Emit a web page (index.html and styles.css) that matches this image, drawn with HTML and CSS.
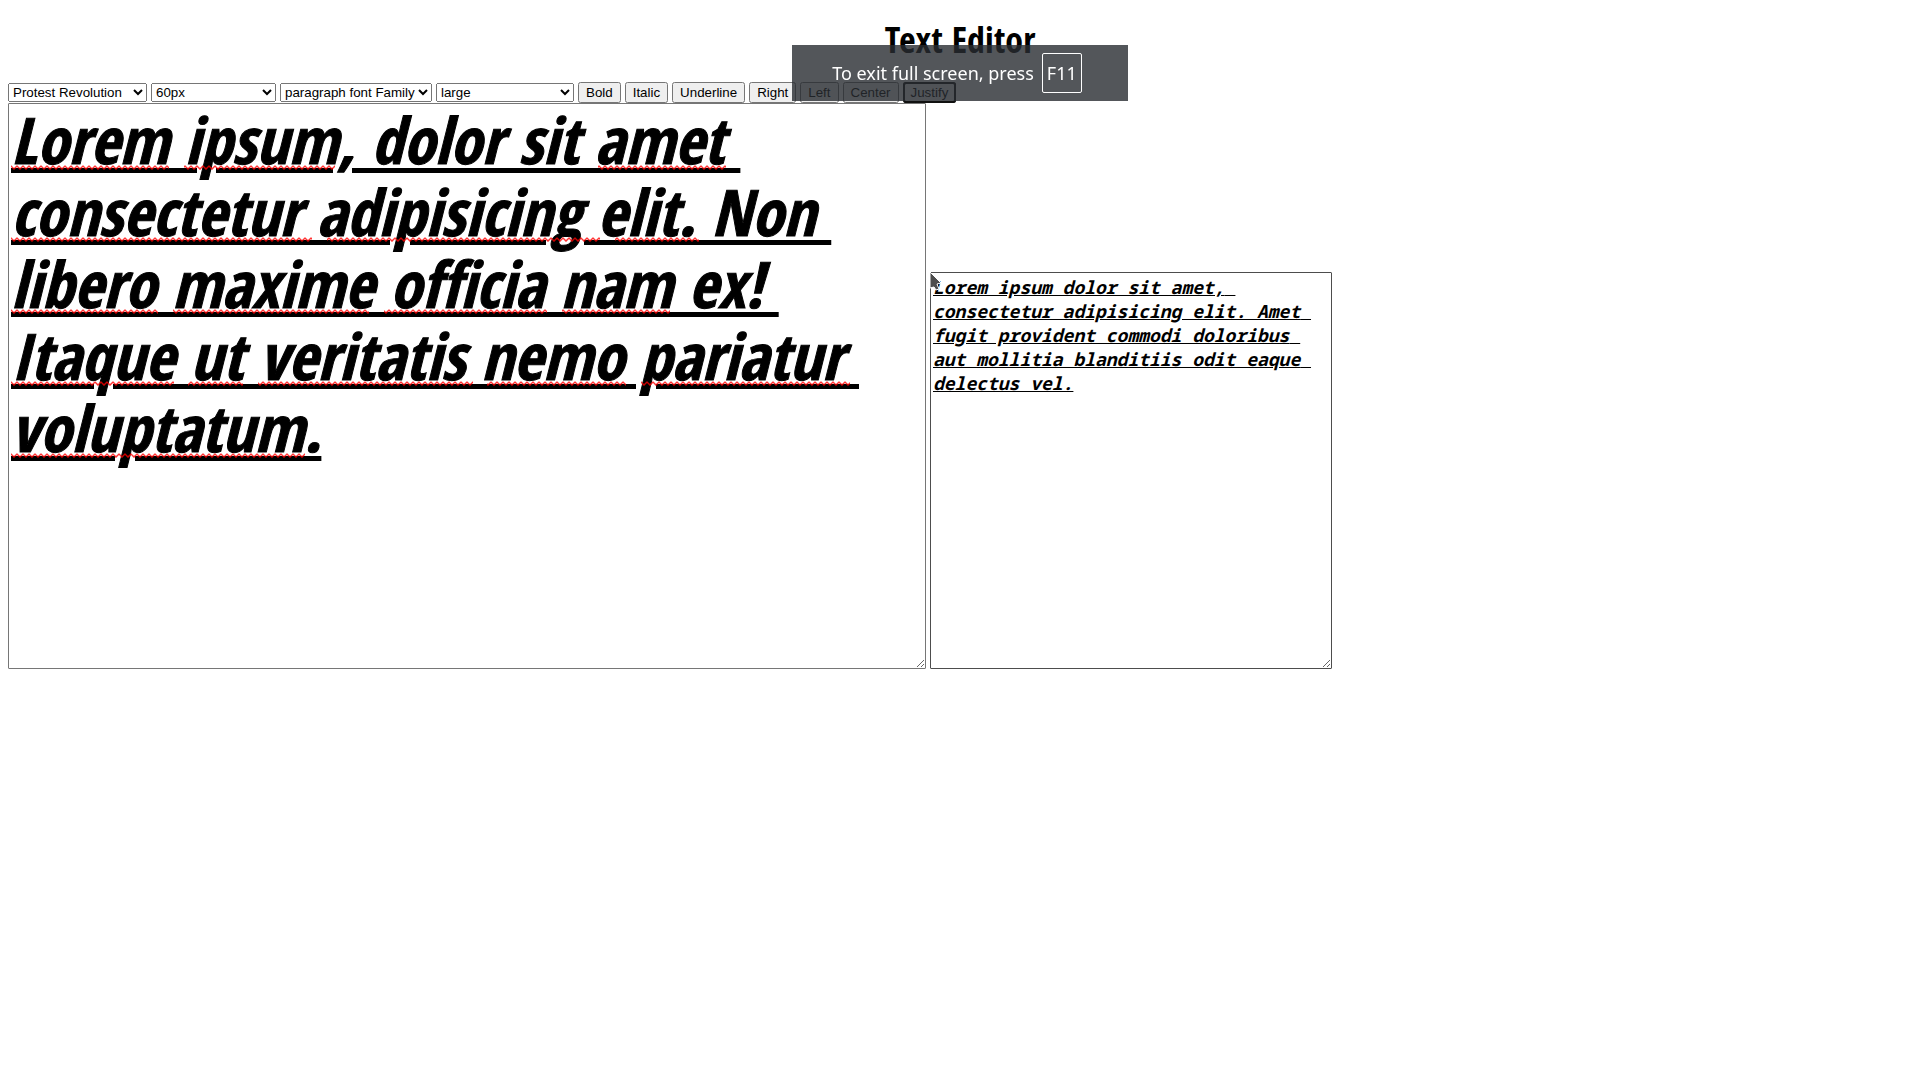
FILE: index.html
```html
<!DOCTYPE html>
<html lang="en">
<head>
<meta charset="utf-8">
<title>Text Editor</title>
<link rel="stylesheet" href="styles.css">
</head>
<body>
<h1 class="title">Text Editor</h1>
<div class="toolbar">
  <select class="pick pick-font" aria-label="Heading font family"><option>Protest Revolution</option></select>
  <select class="pick pick-size" aria-label="Heading font size"><option>60px</option></select>
  <select class="pick pick-para" aria-label="Paragraph font family"><option>paragraph font Family</option></select>
  <select class="pick pick-scale" aria-label="Paragraph font size"><option>large</option></select>
  <button type="button">Bold</button>
  <button type="button">Italic</button>
  <button type="button">Underline</button>
  <button type="button">Right</button>
  <button type="button">Left</button>
  <button type="button">Center</button>
  <button type="button" class="focused">Justify</button>
</div>
<main class="editors">
  <div class="heading-wrap">
    <textarea class="editor heading" aria-label="Heading text" spellcheck="false">Lorem ipsum, dolor sit amet 
consectetur adipisicing elit. Non 
libero maxime officia nam ex! 
Itaque ut veritatis nemo pariatur 
voluptatum.</textarea>
    <svg class="squiggles" width="918" height="566" aria-hidden="true">
      <defs>
        <pattern id="wave" width="6" height="5" patternUnits="userSpaceOnUse">
          <path d="M-1 .5 0 1 3 4 6 1 7 .5" fill="none" stroke="#f00" stroke-opacity=".8" stroke-width="1.5"/>
        </pattern>
      </defs>
      <g fill="url(#wave)">
        <g transform="translate(3 62)"><rect width="158" height="5"/><rect x="173" width="151" height="5"/><rect x="587" width="128" height="5"/></g>
        <g transform="translate(3 134)"><rect width="301" height="5"/><rect x="316" width="273" height="5"/><rect x="604" width="84" height="5"/></g>
        <g transform="translate(3 206)"><rect width="147" height="5"/><rect x="162" width="196" height="5"/><rect x="373" width="163" height="5"/><rect x="551" width="108" height="5"/></g>
        <g transform="translate(3 278)"><rect width="163" height="5"/><rect x="177" width="55" height="5"/><rect x="247" width="215" height="5"/><rect x="476" width="139" height="5"/><rect x="630" width="209" height="5"/></g>
        <g transform="translate(3 350)"><rect width="294" height="5"/></g>
      </g>
    </svg>
  </div>
  <div class="para-wrap">
    <textarea class="editor para" aria-label="Paragraph text" spellcheck="false">Lorem ipsum dolor sit amet, consectetur adipisicing elit. Amet fugit provident commodi doloribus aut mollitia blanditiis odit eaque delectus vel.</textarea>
    <svg class="pointer" width="12" height="20" viewBox="0 0 12 20" aria-hidden="true"><path d="M0 0 11 11 7 12 9 17 6 18 4 15 0 16Z" fill="#4d4d4d" stroke="#fff" stroke-width="1"/></svg>
  </div>
</main>
<div class="notice" role="status">To exit full screen, press <kbd class="key">F11</kbd></div>
</body>
</html>
```
FILE: styles.css
```css
body {
  margin: 0;
  padding: 20px 8px 8px;
  background: #fff;
  color: #000;
  font-family: "Liberation Sans", Arial, sans-serif;
}

.title {
  margin: 0 0 22px;
  font: bold 36px/40px "Open Sans Condensed", "Liberation Sans Narrow", sans-serif;
  text-align: center;
}

.toolbar {
  display: flex;
  flex-wrap: wrap;
  align-items: center;
  gap: 0 4px;
}

.toolbar button {
  margin: 0;
}

.pick {
  height: 19px;
}

.pick-font { width: 139px; }
.pick-size { width: 125px; }
.pick-para { width: 152px; }
.pick-scale { width: 138px; }

.focused {
  border-radius: 3px;
  outline: 2px solid #101010;
  outline-offset: -2px;
}

.editors {
  display: flex;
  flex-wrap: wrap;
  align-items: flex-end;
  gap: 4px;
}

.heading-wrap,
.para-wrap {
  position: relative;
  display: flex;
  max-width: 100%;
}

.editor {
  box-sizing: border-box;
  max-width: 100%;
  margin: 0;
  padding: 2px;
  border: 1px solid #767676;
  border-radius: 1px;
  font-weight: bold;
  font-style: italic;
  text-decoration: underline;
}

.heading {
  width: 918px;
  height: 566px;
  padding-top: 0;
  font-family: "Open Sans Condensed", "Liberation Sans Narrow", sans-serif;
  font-size: 64px;
  line-height: 72px;
  text-decoration-thickness: 5px;
  text-underline-offset: 4px;
  -webkit-text-stroke: 1px #000;
}

.para {
  width: 402px;
  height: 397px;
  border-color: #4d4d4d;
  font-family: "Noto Sans Mono", "DejaVu Sans Mono", monospace;
  font-size: 18px;
  line-height: 24px;
}

.squiggles {
  position: absolute;
  top: 0;
  left: 0;
  pointer-events: none;
}

.pointer {
  position: absolute;
  top: 0;
  left: 0;
}

.notice {
  position: fixed;
  top: 45px;
  left: 50%;
  display: flex;
  align-items: center;
  justify-content: center;
  gap: 8px;
  box-sizing: border-box;
  width: 336px;
  height: 56px;
  padding-right: 6px;
  transform: translateX(-50%);
  background: rgba(40, 44, 49, .8);
  color: #fff;
  font: 18px/24px "Noto Sans", sans-serif;
}

.key {
  padding: 7px 4px;
  border: 1px solid #fff;
  border-radius: 2px;
  font: inherit;
}
```
